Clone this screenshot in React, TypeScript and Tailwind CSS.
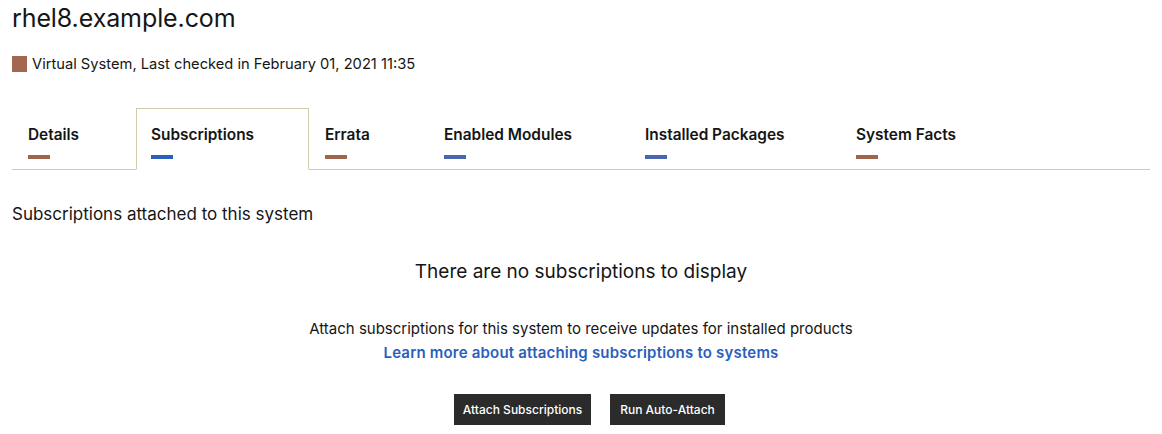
import React from "react";

const tabs = [
  { label: "Details", width: "w-[124px]", bar: "bg-[#a0644c]", active: false },
  { label: "Subscriptions", width: "w-[173px]", bar: "bg-[#2b5fbd]", active: true },
  { label: "Errata", width: "w-[119px]", bar: "bg-[#a0644c]", active: false },
  { label: "Enabled Modules", width: "w-[201px]", bar: "bg-[#4a66b0]", active: false },
  { label: "Installed Packages", width: "w-[211px]", bar: "bg-[#4a66b0]", active: false },
  { label: "System Facts", width: "w-[200px]", bar: "bg-[#a0644c]", active: false },
];

const App = () => {
  return (
    <div className="min-h-[434px] bg-white px-3 text-[#151515] font-['Inter',sans-serif]">
      <h1 className="pt-[3px] text-[25px] leading-[30px] tracking-[-0.1px]">rhel8.example.com</h1>
      <div className="mt-[22px] flex items-center gap-[5px] text-[14.7px] leading-[18px]">
        <span className="inline-block h-4 w-[15px] bg-[#a3664f]" />
        <span>Virtual System, Last checked in February 01, 2021 11:35</span>
      </div>
      <div className="mt-[35px] flex border-b border-[#d3cbae]">
        {tabs.map((t) => (
          <div
            key={t.label}
            className={`${t.width} -mb-px flex h-[62px] flex-col ${
              t.active
                ? "border border-b-white border-[#d3cbae] bg-white pl-[14px]"
                : "pl-4"
            }`}
          >
            <span className={`${t.active ? "mt-[17px]" : "mt-[18px]"} text-[15.4px] leading-[18px] font-semibold`}>
              {t.label}
            </span>
            <span className={`mt-[11px] block h-1 w-[22px] ${t.bar}`} />
          </div>
        ))}
      </div>
      <p className="mt-[34px] text-[17px] leading-5">Subscriptions attached to this system</p>
      <div className="flex flex-col items-center">
        <p className="mt-[36px] text-[19px] leading-6">There are no subscriptions to display</p>
        <p className="mt-[36px] text-[15px] leading-[18px]">
          Attach subscriptions for this system to receive updates for installed products
        </p>
        <a href="#" className="mt-[6px] text-[15px] leading-[18px] font-semibold tracking-[0.2px] text-[#2b5fbd]">
          Learn more about attaching subscriptions to systems
        </a>
        <div className="mt-[32px] ml-[17px] flex gap-[19px]">
          <button className="h-[31px] w-[137px] bg-[#2b2b2b] text-[12px] font-medium text-white">
            Attach Subscriptions
          </button>
          <button className="h-[31px] w-[115px] bg-[#2b2b2b] text-[12px] font-medium text-white">
            Run Auto-Attach
          </button>
        </div>
      </div>
    </div>
  );
};

export default App;
